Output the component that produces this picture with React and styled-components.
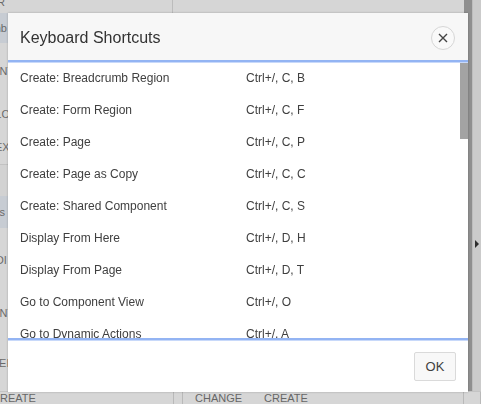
import React from "react";
import styled, { createGlobalStyle } from "styled-components";

const GlobalStyle = createGlobalStyle`
  html, body {
    margin: 0;
    padding: 0;
    background: #d3d3d3;
    font-family: "Liberation Sans", Arial, sans-serif;
    overflow: hidden;
  }
`;

const shortcuts = [
  ["Create: Breadcrumb Region", "Ctrl+/, C, B"],
  ["Create: Form Region", "Ctrl+/, C, F"],
  ["Create: Page", "Ctrl+/, C, P"],
  ["Create: Page as Copy", "Ctrl+/, C, C"],
  ["Create: Shared Component", "Ctrl+/, C, S"],
  ["Display From Here", "Ctrl+/, D, H"],
  ["Display From Page", "Ctrl+/, D, T"],
  ["Go to Component View", "Ctrl+/, O"],
  ["Go to Dynamic Actions", "Ctrl+/, A"],
  ["Go to Gallery", "Ctrl+/, G"],
  ["Go to Grid Layout", "Ctrl+/, L"],
  ["Go to Help", "Ctrl+/, H"],
  ["Go to Messages", "Ctrl+/, M"],
  ["Go to Page Search", "Ctrl+/, S"],
  ["Go to Page Shared Components", "Ctrl+/, X"],
  ["Go to Processing", "Ctrl+/, P"],
  ["Go to Property Editor", "Ctrl+/, E"],
  ["Go to Rendering", "Ctrl+/, R"],
  ["Go to Code Editor", "Ctrl+/, F"],
  ["Keyboard Shortcuts", "Alt+Shift+F1"],
  ["Redo", "Ctrl+Y"],
  ["Reset Layout", "Ctrl+/, Ctrl+R"],
  ["Restore Tabs", "Ctrl+/, Ctrl+T"],
  ["Run Page", "Ctrl+Alt+R"],
  ["Save", "Ctrl+Alt+S"],
  ["Save and Run Page", "Ctrl+Alt+Enter"],
  ["Toggle Mode", "Ctrl+/, Ctrl+M"],
  ["Undo", "Ctrl+Z"],
  ["Utilities", "Ctrl+/, U"],
  ["Zoom In", "Ctrl+/, Ctrl+I"],
  ["Zoom Out", "Ctrl+/, Ctrl+O"],
];

const leftRows = [
  { h: 13, text: "R", bg: "#d6d6d6", shift: -3 },
  { h: 30, text: "Breadcrumb", bg: "#c7ccd3", shift: -53 },
  { h: 56, text: "CONTENT", bg: "#d6d6d6", shift: -39 },
  { h: 32, text: "BODY SLO", bg: "#d6d6d6", shift: -46 },
  { h: 34, text: "REGION TEX", bg: "#d6d6d6", shift: -58, line: true },
  { h: 31, text: "", bg: "#d2d2d2", shift: 0 },
  { h: 32, text: "Items", bg: "#c7ccd3", shift: -22 },
  { h: 64, text: "FOOI", bg: "#d6d6d6", shift: -20 },
  { h: 44, text: "CONTENT", bg: "#d6d6d6", shift: -39 },
  { h: 56, text: "AFTER HEI", bg: "#d6d6d6", shift: -48 },
];

const App = () => {
  return (
    <>
      <GlobalStyle />
      <Page>
        <Workspace>
          <LeftPanel>
            {leftRows.map((r, i) => (
              <LeftRow key={i} $h={r.h} $bg={r.bg} $line={r.line} $shift={r.shift}>
                <span>{r.text}</span>
              </LeftRow>
            ))}
          </LeftPanel>
          <Center />
          <RightGutter>
            <Splitter />
            <SideBar>
              <Arrow />
            </SideBar>
          </RightGutter>
        </Workspace>
        <BottomBar>
          <BottomCell $w={173}>
            <span>CREATE</span>
          </BottomCell>
          <BottomCell $w={8} />
          <BottomLabels>
            <span>CHANGE</span>
            <span>CREATE</span>
          </BottomLabels>
          <BottomCell $w={16} />
        </BottomBar>
      </Page>

      <Dialog role="dialog" aria-label="Keyboard Shortcuts">
        <Header>
          <Title>Keyboard Shortcuts</Title>
          <CloseButton aria-label="Close">
            <svg width="12" height="12" viewBox="0 0 12 12">
              <path
                d="M2 2 L10 10 M10 2 L2 10"
                stroke="#444"
                strokeWidth="1.4"
                fill="none"
              />
            </svg>
          </CloseButton>
        </Header>
        <BodyFrame>
          <Body>
            {shortcuts.map(([name, keys]) => (
              <Row key={name}>
                <Name>{name}</Name>
                <Keys>{keys}</Keys>
              </Row>
            ))}
          </Body>
          <ScrollThumb />
        </BodyFrame>
        <Footer>
          <OkButton>OK</OkButton>
        </Footer>
      </Dialog>
    </>
  );
};

const Page = styled.div`
  width: 481px;
  height: 404px;
  display: flex;
  flex-direction: column;
  background: #d6d6d6;
`;

const Workspace = styled.div`
  flex: 1;
  display: flex;
  min-height: 0;
`;

const LeftPanel = styled.div`
  width: 172px;
  display: flex;
  flex-direction: column;
  border-right: 1px solid #bcbcbc;
`;

const LeftRow = styled.div`
  height: ${(p) => p.$h}px;
  background: ${(p) => p.$bg};
  border-bottom: ${(p) => (p.$line ? "1px solid #c2c2c2" : "none")};
  display: flex;
  align-items: center;
  overflow: hidden;
  font-size: 11px;
  color: #6a6a6a;

  span {
    white-space: nowrap;
    margin-left: ${(p) => p.$shift}px;
  }
  &:first-child span {
    margin-top: -8px;
  }
`;

const Center = styled.div`
  flex: 1;
  background: #d6d6d6;
`;

const RightGutter = styled.div`
  width: 17px;
  display: flex;
`;

const Splitter = styled.div`
  width: 8px;
  background: #8f8f8f;
`;

const SideBar = styled.div`
  flex: 1;
  background: #cbcbcb;
  border-left: 1px solid #bdbdbd;
  display: flex;
  align-items: center;
  justify-content: center;
  padding-top: 96px;
`;

const Arrow = styled.div`
  width: 0;
  height: 0;
  border-top: 4px solid transparent;
  border-bottom: 4px solid transparent;
  border-left: 4px solid #2e2e2e;
`;

const BottomBar = styled.div`
  height: 12px;
  display: flex;
  background: #d6d6d6;
  border-top: 1px solid #c4c4c4;
  font-size: 11px;
  color: #666;
`;

const BottomCell = styled.div`
  width: ${(p) => p.$w}px;
  border-right: 1px solid #b9b9b9;
  overflow: hidden;
  line-height: 12px;

  span {
    margin-left: -8px;
  }
`;

const BottomLabels = styled.div`
  flex: 1;
  display: flex;
  gap: 22px;
  padding-left: 12px;
  line-height: 12px;
  border-right: 1px solid #b9b9b9;
`;

const Dialog = styled.div`
  position: fixed;
  left: 8px;
  top: 13px;
  width: 460px;
  height: 379px;
  background: #fff;
  display: flex;
  flex-direction: column;
  box-shadow: 0 0 2px rgba(0, 0, 0, 0.25);
`;

const Header = styled.div`
  height: 49px;
  flex-shrink: 0;
  background: #f7f7f7;
  display: flex;
  align-items: center;
  justify-content: space-between;
  padding: 2px 13px 0 12px;
  box-sizing: border-box;
  border-bottom: 2px solid #93b4f3;
  box-shadow: 0 1px 0 #c8d9fa;
  position: relative;
  z-index: 1;
`;

const Title = styled.h1`
  margin: 0;
  font-size: 16px;
  font-weight: normal;
  color: #333;
`;

const CloseButton = styled.button`
  width: 24px;
  height: 24px;
  border-radius: 50%;
  border: 1px solid #d6d6d6;
  background: #f9f9f9;
  padding: 0;
  display: flex;
  align-items: center;
  justify-content: center;
`;

const BodyFrame = styled.div`
  flex: 1;
  min-height: 0;
  position: relative;
  border-bottom: 2px solid #93b4f3;
`;

const Body = styled.div`
  height: 100%;
  overflow: hidden;
`;

const ScrollThumb = styled.div`
  position: absolute;
  top: 0;
  right: 0;
  width: 8px;
  height: 77px;
  background: #a3a3a3;
`;

const Row = styled.div`
  height: 32px;
  display: flex;
  align-items: center;
  padding-left: 12px;
  font-size: 12px;
  color: #404040;
`;

const Name = styled.div`
  width: 226px;
  white-space: nowrap;
`;

const Keys = styled.div`
  white-space: nowrap;
`;

const Footer = styled.div`
  height: 52px;
  flex-shrink: 0;
  display: flex;
  align-items: center;
  justify-content: flex-end;
  padding-right: 12px;
  box-shadow: inset 0 1px 0 #c8d9fa;
`;

const OkButton = styled.button`
  width: 42px;
  height: 29px;
  background: #f8f8f8;
  border: 1px solid #dadada;
  border-radius: 2px;
  font-family: inherit;
  font-size: 13px;
  color: #404040;
  padding: 0;
`;

export default App;
